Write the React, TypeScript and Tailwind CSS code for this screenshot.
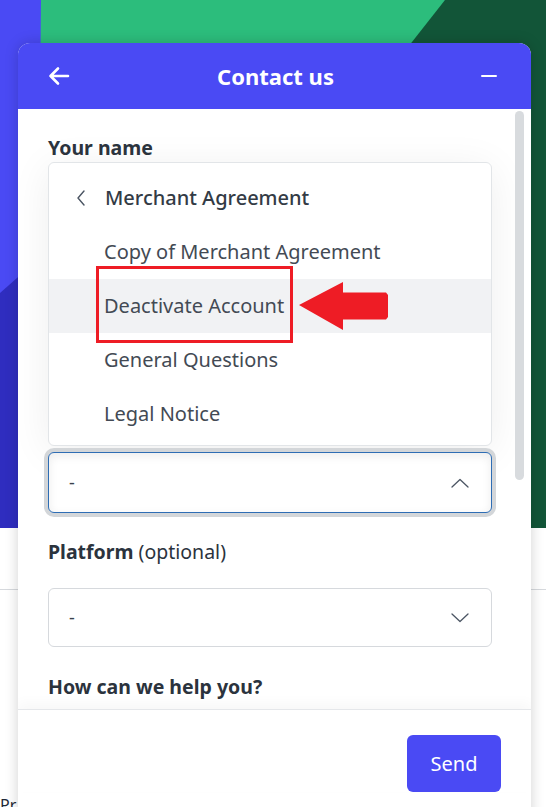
import React from "react";

const font = { fontFamily: '"Noto Sans", "Open Sans", sans-serif' };

function ChevronLeft() {
  return (
    <svg width="10" height="16" viewBox="0 0 10 16" fill="none" stroke="#4b5563" strokeWidth="1.4" strokeLinecap="round" strokeLinejoin="round">
      <path d="M8 1 L2 8 L8 15" />
    </svg>
  );
}

function Chevron({ up }: { up?: boolean }) {
  return (
    <svg width="18" height="10" viewBox="0 0 18 10" fill="none" stroke="#4b5563" strokeWidth="1.3" strokeLinecap="round" strokeLinejoin="round">
      {up ? <path d="M1 9 L9 1.5 L17 9" /> : <path d="M1 1 L9 8.5 L17 1" />}
    </svg>
  );
}

const items = [
  "Copy of Merchant Agreement",
  "Deactivate Account",
  "General Questions",
  "Legal Notice",
];

export default function App() {
  return (
    <div className="relative w-[546px] h-[807px] overflow-hidden bg-white" style={font}>
      {/* hero backdrop */}
      <div className="h-[528px] relative">
        <svg className="absolute inset-0" width="546" height="528" viewBox="0 0 546 528">
          <rect width="546" height="528" fill="#4a4af4" />
          <polygon points="0,293 60,240 60,528 0,528" fill="#2f2dbf" />
          <polygon points="41,0 445,0 300,528 36,528" fill="#2cbd7c" />
          <polygon points="445,0 546,0 546,528 30,528" fill="#125538" />
        </svg>
      </div>
      <div className="h-[61px]" />
      <div className="border-t border-[#d6d9dd] h-[210px] relative">
        <span className="absolute left-0 top-[207px] text-[16px] text-[#1f2937] leading-none">Pr</span>
      </div>

      {/* contact widget */}
      <div className="absolute left-[18px] top-[43px] w-[513px] h-[800px] rounded-t-[12px] bg-white overflow-hidden shadow-[0_0_14px_rgba(0,0,0,0.18)] flex flex-col">
        <div className="h-[66px] bg-[#4a4af4] flex items-center justify-between pl-[30px] pr-[34px] shrink-0">
          <svg width="22" height="20" viewBox="0 0 22 20" fill="none" stroke="white" strokeWidth="2.6" strokeLinecap="round" strokeLinejoin="round">
            <path d="M20 10 H2.5 M10 2.5 L2.5 10 L10 17.5" />
          </svg>
          <span className="text-white font-bold text-[22px] leading-none">Contact us</span>
          <div className="w-[16px] h-[2.5px] bg-white rounded-full" />
        </div>

        <div className="h-[600px] flex shrink-0">
          <div className="w-[474px] pl-[30px] pt-[27px]">
            <div className="text-[19.5px] leading-[24px] font-bold text-[#2b333d]">Your name</div>
            <div className="mt-[2px] w-[444px] rounded-[6px] border border-[#e2e5e8] bg-white pt-[8px] pb-[4px] shadow-[0_6px_40px_rgba(0,0,0,0.07)]">
              <div className="h-[54px] flex items-center pl-[27px]">
                <ChevronLeft />
                <span className="ml-[19px] text-[20px] leading-[24px] font-medium text-[#333b45]">Merchant Agreement</span>
              </div>
              {items.map((t, i) => (
                <div
                  key={t}
                  className={
                    i === 1
                      ? "h-[54px] flex items-center pl-[55px] bg-[#f1f2f4] text-[20px] leading-[24px] text-[#434a54]"
                      : "h-[54px] flex items-center pl-[55px] text-[20px] leading-[24px] text-[#434a54]"
                  }
                >
                  {t}
                </div>
              ))}
            </div>

            <div className="mt-[6px] w-[444px] h-[61px] rounded-[6px] border border-[#2e6db4] ring-[4px] ring-[#d3d6d9] shadow-[inset_0_3px_10px_rgba(0,0,0,0.08)] bg-white flex items-center justify-between pl-[20px] pr-[22px]">
              <span className="text-[18px] text-[#3a414b]">-</span>
              <Chevron up />
            </div>

            <div className="mt-[27px] text-[19.5px] leading-[24px] text-[#2b333d]">
              <span className="font-bold">Platform</span> <span>(optional)</span>
            </div>
            <div className="mt-[24px] w-[444px] h-[59px] rounded-[6px] border border-[#d6d9dd] bg-white flex items-center justify-between pl-[20px] pr-[22px]">
              <span className="text-[18px] text-[#3a414b]">-</span>
              <Chevron />
            </div>

            <div className="mt-[28px] text-[19.5px] leading-[24px] font-bold text-[#2b333d]">How can we help you?</div>
          </div>
          <div className="pt-[2px] pl-[23px]">
            <div className="w-[9px] h-[369px] rounded-full bg-[#d8dbde]" />
          </div>
        </div>

        <div className="border-t border-[#e5e7ea] shadow-[0_-6px_12px_rgba(0,0,0,0.03)] flex justify-end pt-[25px] pr-[30px]">
          <button className="w-[94px] h-[57px] rounded-[6px] bg-[#4a4af4] text-white text-[20px]">Send</button>
        </div>
      </div>

      {/* callout over the highlighted option */}
      <div className="absolute left-[96px] top-[266px] w-[197px] h-[77px] border-[3px] border-[#ee1c25]" />
      <svg className="absolute left-[298px] top-[280px]" width="92" height="54" viewBox="298 280 92 54">
        <polygon points="299,305 343,282 343,292.5 386,292.5 388,295 388,317 386,319.5 343,319.5 343,330" fill="#ee1c25" />
      </svg>
    </div>
  );
}
